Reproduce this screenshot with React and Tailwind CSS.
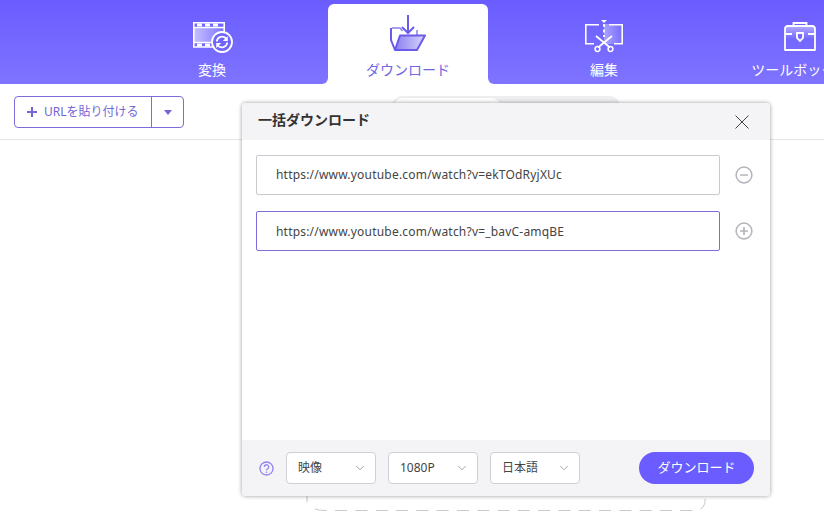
import { ChevronDown } from "lucide-react";

const font = "font-['Noto_Sans','Noto_Sans_CJK_JP',sans-serif]";

const ConvertIcon = () => (
  <svg width="48" height="40" viewBox="0 0 48 40" fill="none">
    <defs>
      <linearGradient id="film" x1="0" y1="0" x2="1" y2="0">
        <stop offset="0" stopColor="#fff" stopOpacity="0.6" />
        <stop offset="1" stopColor="#fff" stopOpacity="0.08" />
      </linearGradient>
    </defs>
    <rect x="5" y="13" width="32" height="15" fill="url(#film)" />
    <path d="M28 33H5.800V8.800h30.400V20" stroke="#fff" strokeWidth="1.600" />
    <path d="M5.800 13.500h30.400M5.800 28.500h20" stroke="#fff" strokeWidth="1.600" />
    <path d="M9 11h5M17 11h5M25 11h5M9 31h5M17 31h5" stroke="#fff" strokeWidth="2.800" />
    <circle cx="34" cy="28" r="10" fill="#7064ff" stroke="#fff" strokeWidth="1.800" />
    <path d="M28.800 27.500a5.300 5.300 0 0 1 9.300-3M39.200 28.500a5.300 5.300 0 0 1-9.300 3" stroke="#fff" strokeWidth="1.800" />
    <path d="M39.800 22v5h-5zM28.200 34v-5h5z" fill="#fff" />
  </svg>
);

const DownloadIcon = () => (
  <svg width="48" height="40" viewBox="0 0 48 40" fill="none">
    <defs>
      <linearGradient id="folder" x1="0" y1="0" x2="1" y2="0">
        <stop offset="0" stopColor="#8b80f0" />
        <stop offset="1" stopColor="#d9d5fc" />
      </linearGradient>
    </defs>
    <path d="M8 14h8l2.500 3M33 16v5" stroke="#8a7ff0" strokeWidth="1.500" />
    <path d="M7 14v12l4 10" stroke="#6a5ce8" strokeWidth="2" />
    <path d="M16 21.500h25l-8 14.500H11z" fill="url(#folder)" stroke="#6a5ce8" strokeWidth="2" strokeLinejoin="round" />
    <path d="M24 1v18M18 13l6 6 6-6" stroke="#6a5ce8" strokeWidth="2" />
  </svg>
);

const EditIcon = () => (
  <svg width="48" height="40" viewBox="0 0 48 40" fill="none">
    <defs>
      <linearGradient id="cut" x1="0" y1="0" x2="1" y2="0">
        <stop offset="0" stopColor="#fff" stopOpacity="0.4" />
        <stop offset="1" stopColor="#fff" stopOpacity="0.03" />
      </linearGradient>
    </defs>
    <rect x="24" y="10" width="19" height="20" fill="url(#cut)" />
    <path d="M19 10.800H5.800v19h8.200M29 10.800h13.200v19H34" stroke="#fff" strokeWidth="1.600" />
    <path d="M21 6h6l-3 3z" fill="#fff" />
    <path d="M24 10v3M24 15.500v3M24 21v2" stroke="#fff" strokeWidth="1.800" />
    <path d="M16 22 30 33.500M32 22 18 33.500" stroke="#fff" strokeWidth="1.700" />
    <circle cx="17.500" cy="35" r="2.400" stroke="#fff" strokeWidth="1.500" />
    <circle cx="30.500" cy="35" r="2.400" stroke="#fff" strokeWidth="1.500" />
  </svg>
);

const ToolboxIcon = () => (
  <svg width="48" height="40" viewBox="0 0 48 40" fill="none">
    <defs>
      <linearGradient id="box" x1="0" y1="0" x2="0" y2="1">
        <stop offset="0" stopColor="#fff" stopOpacity="0.45" />
        <stop offset="1" stopColor="#fff" stopOpacity="0.05" />
      </linearGradient>
    </defs>
    <rect x="9" y="12" width="30" height="12" rx="2" fill="url(#box)" />
    <path d="M17.500 12V9h13v3" stroke="#fff" strokeWidth="1.800" />
    <path d="M9 36V15q0-3 3-3h24q3 0 3 3v21z" stroke="#fff" strokeWidth="1.800" strokeLinejoin="round" />
    <path d="M9 20h7M32 20h7" stroke="#fff" strokeWidth="1.800" />
    <path d="M21 19h6v5l-3 3-3-3z" stroke="#fff" strokeWidth="1.800" fill="#7468ff" />
  </svg>
);

const NavTab = ({ icon, label }) => (
  <div className="w-[196px] shrink-0 flex flex-col items-center pt-[14px]">
    {icon}
    <span className="text-white text-[14px] leading-[20px] whitespace-nowrap mt-[6px]">{label}</span>
  </div>
);

const RoundBtn = ({ plus }) => (
  <svg width="18" height="18" viewBox="0 0 18 18" fill="none" className="shrink-0">
    <circle cx="9" cy="9" r="7.900" stroke="#b4b4bd" strokeWidth="1.500" />
    <path d={plus ? "M5 9h8M9 5v8" : "M5 9h8"} stroke="#b4b4bd" strokeWidth="1.700" />
  </svg>
);

const Select = ({ label }) => (
  <div className="w-[90px] h-[32px] bg-white border border-[#cfcfd6] rounded-[4px] flex items-center justify-between pl-[11px] pr-[8px] text-[12px] text-[#444]">
    <span>{label}</span>
    <ChevronDown size={14} strokeWidth={1.400} className="text-[#8f8f99]" />
  </div>
);

export default function App() {
  return (
    <div className={`relative w-[824px] h-[517px] overflow-hidden bg-white ${font}`}>
      {/* top nav */}
      <div className="h-[84px] flex pl-[114px] bg-gradient-to-b from-[#6a5cff] to-[#7f73ff] overflow-hidden">
        <NavTab icon={<ConvertIcon />} label="変換" />
        <div className="w-[196px] shrink-0 flex justify-center pt-[4px]">
          <div className="relative w-[160px] bg-white rounded-t-[6px] flex flex-col items-center pt-[10px]">
            <div className="absolute -left-[6px] bottom-0 w-[6px] h-[6px] bg-white">
              <div className="w-full h-full bg-[#7f73ff] rounded-br-[6px]" />
            </div>
            <div className="absolute -right-[6px] bottom-0 w-[6px] h-[6px] bg-white">
              <div className="w-full h-full bg-[#7f73ff] rounded-bl-[6px]" />
            </div>
            <DownloadIcon />
            <span className="text-[#7266e0] text-[14px] leading-[20px] mt-[6px]">ダウンロード</span>
          </div>
        </div>
        <NavTab icon={<EditIcon />} label="編集" />
        <NavTab icon={<ToolboxIcon />} label="ツールボックス" />
      </div>

      {/* toolbar */}
      <div className="h-[56px] border-b border-[#e6e6e9] flex items-start pt-[12px] pl-[14px]">
        <div className="h-[32px] w-[170px] flex border border-[#7a6ed8] rounded-[4px] text-[#7266d8]">
          <div className="w-[137px] border-r border-[#7a6ed8] flex items-center pl-[12px] gap-[7px]">
            <svg width="10" height="10" viewBox="0 0 10 10"><path d="M5 0v10M0 5h10" stroke="#7266d8" strokeWidth="2" /></svg>
            <span className="text-[12px] whitespace-nowrap">URLを貼り付ける</span>
          </div>
          <div className="flex-1 flex items-center justify-center">
            <div className="w-0 h-0 border-x-[4px] border-x-transparent border-t-[5px] border-t-[#7266d8]" />
          </div>
        </div>
      </div>

      {/* things peeking out from behind the dialog */}
      <div className="absolute left-[392px] top-[96px] w-[228px] h-[10px] rounded-t-[12px] bg-[#eeeef0]" />
      <div className="absolute left-[394px] top-[97px] w-[106px] h-[9px] rounded-t-[10px] bg-white border-t border-[#ececef]" />
      <svg className="absolute left-[300px] top-[490px]" width="420" height="27" viewBox="0 0 420 27" fill="none">
        <path d="M7 6v6" stroke="#c4c4ca" />
        <path d="M15 19q3 1.500 12 1.500H392q12 0 13-8V6" stroke="#c9c9cf" strokeDasharray="12 8.300" />
      </svg>

      {/* dialog */}
      <div className="absolute left-[242px] top-[103px] w-[528px] h-[393px] bg-white rounded-[4px] shadow-[0_0_4px_rgba(0,0,0,0.4)] flex flex-col overflow-hidden">
        <div className="h-[37px] shrink-0 bg-[#f4f4f6] flex items-center justify-between pl-[16px] pr-[21px] pb-[4px]">
          <span className="text-[14px] font-bold text-[#333]">一括ダウンロード</span>
          <svg width="14" height="14" viewBox="0 0 14 14" className="mt-[4px]"><path d="M.5.5l13 13M13.500.5l-13 13" stroke="#444" strokeWidth="1" /></svg>
        </div>

        <div className="flex-1 flex flex-col gap-[16px] pt-[15px] pl-[14px] pr-[17px]">
          <div className="flex items-center justify-between">
            <div className="w-[464px] h-[40px] border border-[#c9c9cf] rounded-[2px] flex items-center pl-[19px] text-[12px] tracking-[0.2px] text-[#444]">
              https://www.youtube.com/watch?v=ekTOdRyjXUc
            </div>
            <RoundBtn />
          </div>
          <div className="flex items-center justify-between">
            <div className="w-[464px] h-[40px] border border-[#7a6ed8] rounded-[2px] flex items-center pl-[19px] pt-[1px] text-[12px] tracking-[0.2px] text-[#444]">
              https://www.youtube.com/watch?v=_bavC-amqBE
            </div>
            <RoundBtn plus />
          </div>
        </div>

        <div className="h-[56px] shrink-0 bg-[#f4f4f6] flex items-center pl-[17px] pr-[16px]">
          <svg width="15" height="15" viewBox="0 0 15 15" fill="none" className="mr-[12px]">
            <circle cx="7.500" cy="7.500" r="6.500" stroke="#8f83ee" strokeWidth="1.300" />
            <path d="M5.300 6a2.200 2.200 0 1 1 3.400 1.800c-.8.500-1.200.9-1.200 1.700" stroke="#8f83ee" strokeWidth="1.300" />
            <circle cx="7.500" cy="11.300" r=".8" fill="#8f83ee" />
          </svg>
          <div className="flex gap-[12px]">
            <Select label="映像" />
            <Select label="1080P" />
            <Select label="日本語" />
          </div>
          <button className="ml-auto w-[115px] h-[32px] rounded-full bg-[#6a5cff] text-white text-[13px]">ダウンロード</button>
        </div>
      </div>
    </div>
  );
}
